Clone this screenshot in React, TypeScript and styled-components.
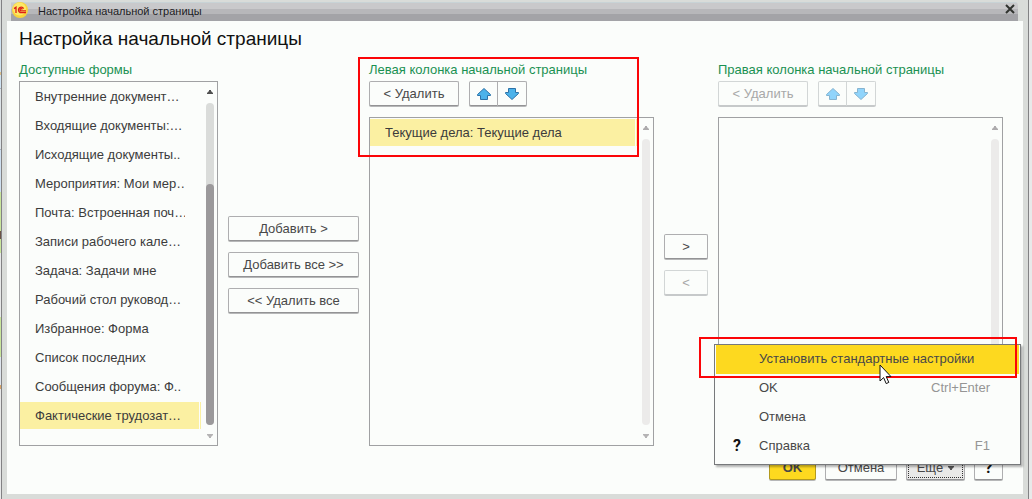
import React from "react";
import styled, { createGlobalStyle, css } from "styled-components";

const GlobalStyle = createGlobalStyle`
  * { box-sizing: border-box; }
  html, body, #root { height: 100%; }
  body {
    margin: 0;
    background: #e6e7e7;
    color: #404040;
    font: 13px/16px "Liberation Sans", Arial, sans-serif;
    overflow: hidden;
  }
  button { font: inherit; }
`;

const Desktop = styled.div`
  height: 100%;
  display: flex;
  padding: 0 3px 0 1px;
  background:
    linear-gradient(
      #d9dcda 0 33px, #cfe3f2 33px 72px, #dcc08c 72px 75px, #cfe3f2 75px 88px, #a9b3bd 88px 89px,
      #dde4e8 89px 149px, #a9b3bd 149px 150px, #cfe0f0 150px 192px, #c9e69c 192px 231px,
      #6b5246 231px 239px, #c9e69c 239px 253px, #e8e9e9 253px 317px, #c9e69c 317px 357px,
      #dfe6ee 357px 385px, #d8a468 385px 389px, #e8e9e9 389px
    ) left / 1px 100% no-repeat,
    #e8e9e9;
`;

const Window = styled.div`
  flex: 1;
  display: flex;
  flex-direction: column;
  border: solid #828284;
  border-width: 0 1px;
  background: #d9dcd9;
  padding: 0 5px 5px;
`;

const TitleBar = styled.header`
  height: 21px;
  flex: none;
  display: flex;
  align-items: center;
  gap: 10px;
  padding: 0 3px 0 1px;
  margin: 0 5px 0 4px;
  border-radius: 0 6px 0 0;
  background: linear-gradient(#d9dcd9 0 2px, #c8d3d6 2px 3px, #c9c9cb 3px 9px, #b7b7ba 9px 14px, #a3a3a7 14px);
  color: #1c1c24;
`;

const WindowTitle = styled.span`
  flex: 1;
  font-size: 11px;
  line-height: 20px;
`;

const Logo = styled.svg`
  flex: none;
  width: 16px;
  height: 18px;
  margin-bottom: 2px;
`;

const CloseButton = styled.button`
  display: flex;
  padding: 0;
  border: 0;
  background: none;
  margin-bottom: 4px;
`;

const Content = styled.main`
  flex: 1;
  display: flex;
  flex-direction: column;
  background: #fbfdfb;
  padding: 6px 20px 13px 12px;
`;

const Heading = styled.h1`
  margin: 0 0 11px;
  font-size: 19px;
  line-height: 24px;
  font-weight: 400;
  color: #111;
`;

const Columns = styled.div`
  flex: 1;
  display: grid;
  grid-template-columns: 199px 131px minmax(0, 1fr) 44px minmax(0, 1fr);
  column-gap: 10px;
`;

const Panel = styled.section`
  position: relative;
  display: flex;
  flex-direction: column;
`;

const PanelTitle = styled.h2`
  margin: 0 0 3px;
  font-size: 13px;
  line-height: 16px;
  font-weight: 400;
  color: #1a9152;
  white-space: nowrap;
`;

const Toolbar = styled.div`
  display: flex;
  gap: 10px;
  margin-bottom: 10px;
`;

const ButtonGroup = styled.div`
  display: flex;
  & > button + button { margin-left: -1px; }
  & > button:first-child { border-radius: 2px 0 0 2px; }
  & > button:last-child { border-radius: 0 2px 2px 0; }
`;

const Button = styled.button<{ $width?: number; $tone?: "primary" | "open" }>`
  display: flex;
  align-items: center;
  justify-content: center;
  gap: 5px;
  flex: none;
  width: ${(p) => (p.$width ? `${p.$width}px` : "auto")};
  height: 25px;
  margin-bottom: 1px;
  padding: 0;
  border: 1px solid #aeaeb0;
  border-bottom-color: #939395;
  border-radius: 2px;
  box-shadow: 0 1px 0 #b6b7b8;
  background: #fbfdfb;
  color: #484848;
  white-space: nowrap;
  &:disabled {
    color: #a8a8a8;
    border-color: #d2d6d6;
    border-bottom-color: #c6c9ca;
    box-shadow: 0 1px 0 #c6c9ca;
  }
  ${(p) =>
    p.$tone === "primary" &&
    css`
      background: #fdd91f;
      border-color: #b39a1d;
      font-weight: 700;
    `}
  ${(p) =>
    p.$tone === "open" &&
    css`
      background: #e9e9e8;
      outline: 1px dotted #333;
      outline-offset: -3px;
    `}
`;

const Transfer = styled.div<{ $top: number }>`
  display: flex;
  flex-direction: column;
  align-items: stretch;
  gap: 10px;
  padding-top: ${(p) => p.$top}px;
`;

const ListBox = styled.div`
  flex: 1;
  display: flex;
  justify-content: space-between;
  border: 1px solid #a0a1a3;
  padding: 1px 3px 0 0;
`;

const Items = styled.ul`
  flex: 1;
  min-width: 0;
  margin: 0;
  padding: 0;
  list-style: none;
  display: flex;
  flex-direction: column;
  gap: 2px;
`;

const Item = styled.li<{ $selected?: boolean }>`
  height: 27px;
  line-height: 27px;
  margin-right: 5px;
  padding: 0 16px 0 15px;
  overflow: clip;
  overflow-clip-margin: content-box;
  white-space: nowrap;
  color: #3c3c3c;
  ${(p) =>
    p.$selected &&
    css`
      background: linear-gradient(
        90deg,
        #fbf0a2 calc(100% - 2px),
        #fbfdfb calc(100% - 2px) calc(100% - 1px),
        #fbf0a2 calc(100% - 1px)
      );
    `}
`;

const ScrollBar = styled.div`
  width: 8px;
  flex: none;
  display: flex;
  flex-direction: column;
  align-items: center;
  padding: 7px 0;
`;

const Track = styled.div<{ $color: string }>`
  flex: 1;
  width: 8px;
  margin: 9px 0;
  border-radius: 4px;
  background: ${(p) => p.$color};
  display: flex;
  align-items: flex-end;
`;

const Thumb = styled.div`
  width: 8px;
  height: 75%;
  border-radius: 4px;
  background: #9b999b;
`;

const Footer = styled.footer`
  position: relative;
  display: flex;
  justify-content: flex-end;
  gap: 9px;
  margin-top: 9px;
`;

const Menu = styled.div`
  position: absolute;
  right: -18px;
  bottom: 16px;
  width: 307px;
  padding: 0 1px 3px;
  border: 1px solid #77797b;
  background: #fbfdfb;
  box-shadow: 2px 2px 2px rgba(0, 0, 0, 0.3);
`;

const MenuItem = styled.button<{ $active?: boolean }>`
  display: grid;
  grid-template-columns: 43px 1fr auto;
  align-items: center;
  width: 100%;
  height: 29px;
  padding: 0 29px 1px 0;
  border: 0;
  text-align: left;
  color: #484848;
  background: ${(p) => (p.$active ? "#fdd91f" : "transparent")};
`;

const HelpMark = styled.span`
  font-family: Roboto, "Liberation Sans", sans-serif;
  font-size: 16px;
  font-weight: 700;
  color: #111;
`;

const MenuMark = styled(HelpMark)`
  padding-left: 17px;
`;

const Shortcut = styled.span`
  color: #959595;
`;

const Callout = styled.div<{ $inset: string; $height: number }>`
  position: absolute;
  inset: ${(p) => p.$inset};
  height: ${(p) => p.$height}px;
  border: 2px solid #fb0508;
  pointer-events: none;
`;

const Cursor = styled.svg`
  position: absolute;
  left: 164px;
  top: 19px;
  width: 13px;
  height: 21px;
  pointer-events: none;
`;

function MoveIcon({ down, muted }: { down?: boolean; muted?: boolean }) {
  return (
    <svg width="16" height="14" viewBox="0 0 16 14">
      <path
        d="M8 1.5 L14.5 7.5 V8.5 H11.5 V12.5 H4.5 V8.5 H1.5 V7.5 Z"
        transform={down ? "rotate(180 8 7)" : undefined}
        fill={muted ? "#90d4fb" : "#4bb2ea"}
        stroke={muted ? "#86b4d0" : "#2c72a8"}
        strokeLinejoin="round"
      />
    </svg>
  );
}

function Arrow({ down, color }: { down?: boolean; color: string }) {
  return (
    <svg width="6" height="4" viewBox="0 0 6 4">
      <path d={down ? "M0 0H6V1L4 3V4H2V3L0 1Z" : "M0 4H6V3L4 1V0H2V1L0 3Z"} fill={color} />
    </svg>
  );
}

function Scroll({ thumb }: { thumb?: boolean }) {
  return (
    <ScrollBar>
      <Arrow color={thumb ? "#505050" : "#adabad"} />
      <Track $color={thumb ? "#dadcda" : "#ecebea"}>{thumb && <Thumb />}</Track>
      <Arrow down color="#b5b4b5" />
    </ScrollBar>
  );
}

function ColumnToolbar({ disabled }: { disabled?: boolean }) {
  return (
    <Toolbar>
      <Button $width={90} disabled={disabled}>&lt; Удалить</Button>
      <ButtonGroup>
        <Button $width={29} disabled={disabled} aria-label="Вверх"><MoveIcon muted={disabled} /></Button>
        <Button $width={30} disabled={disabled} aria-label="Вниз"><MoveIcon down muted={disabled} /></Button>
      </ButtonGroup>
    </Toolbar>
  );
}

const forms = [
  "Внутренние документ…",
  "Входящие документы:…",
  "Исходящие документы..",
  "Мероприятия: Мои мер…",
  "Почта: Встроенная поч…",
  "Записи рабочего кале…",
  "Задача: Задачи мне",
  "Рабочий стол руковод…",
  "Избранное: Форма",
  "Список последних",
  "Сообщения форума: Ф..",
  "Фактические трудозат…",
];

export default function App() {
  return (
    <>
      <GlobalStyle />
      <Desktop>
        <Window>
          <TitleBar>
            <Logo viewBox="0 0 16 18">
              <circle cx="8" cy="9" r="8" fill="#f9d53a" />
              <circle cx="7.5" cy="8" r="6.5" fill="#fde868" />
              <path
                d="M2 7.6 L4 6.2 V12 M11.6 7.6 A2.7 2.7 0 1 0 9.2 11.6 H14 M10.2 8.4 A1.1 1.1 0 1 0 9.2 9.9 H14"
                fill="none"
                stroke="#dd2016"
                strokeWidth="1.3"
              />
            </Logo>
            <WindowTitle>Настройка начальной страницы</WindowTitle>
            <CloseButton aria-label="Закрыть">
              <svg width="10" height="10" viewBox="0 0 10 10">
                <path d="M1 1 L9 9 M9 1 L1 9" stroke="#30332f" strokeWidth="2" />
              </svg>
            </CloseButton>
          </TitleBar>
          <Content>
            <Heading>Настройка начальной страницы</Heading>
            <Columns>
              <Panel>
                <PanelTitle>Доступные формы</PanelTitle>
                <ListBox>
                  <Items>
                    {forms.map((name, i) => (
                      <Item key={name} $selected={i === forms.length - 1}>{name}</Item>
                    ))}
                  </Items>
                  <Scroll thumb />
                </ListBox>
              </Panel>
              <Transfer $top={154}>
                <Button>Добавить &gt;</Button>
                <Button>Добавить все &gt;&gt;</Button>
                <Button>&lt;&lt; Удалить все</Button>
              </Transfer>
              <Panel>
                <PanelTitle>Левая колонка начальной страницы</PanelTitle>
                <ColumnToolbar />
                <ListBox>
                  <Items>
                    <Item $selected>Текущие дела: Текущие дела</Item>
                  </Items>
                  <Scroll />
                </ListBox>
                <Callout $inset="-5px 15px auto -11px" $height={100} />
              </Panel>
              <Transfer $top={172}>
                <Button>&gt;</Button>
                <Button disabled>&lt;</Button>
              </Transfer>
              <Panel>
                <PanelTitle>Правая колонка начальной страницы</PanelTitle>
                <ColumnToolbar disabled />
                <ListBox>
                  <Items />
                  <Scroll />
                </ListBox>
              </Panel>
            </Columns>
            <Footer>
              <Button $width={47} $tone="primary">OK</Button>
              <Button $width={72}>Отмена</Button>
              <Button $width={59} $tone="open">
                Ещё <Arrow down color="#555" />
              </Button>
              <Button $width={29} aria-label="Справка"><HelpMark>?</HelpMark></Button>
              <Menu>
                <MenuItem $active><span /><span>Установить стандартные настройки</span></MenuItem>
                <MenuItem><span /><span>OK</span><Shortcut>Ctrl+Enter</Shortcut></MenuItem>
                <MenuItem><span /><span>Отмена</span></MenuItem>
                <MenuItem><MenuMark>?</MenuMark><span>Справка</span><Shortcut>F1</Shortcut></MenuItem>
                <Callout $inset="-8px 3px auto -16px" $height={41} />
                <Cursor viewBox="0 0 13 21">
                  <path d="M1 1 V17 L4.6 13.6 L7.2 19.6 L9.8 18.4 L7.2 12.6 H12 Z" fill="#fff" stroke="#111" />
                </Cursor>
              </Menu>
            </Footer>
          </Content>
        </Window>
      </Desktop>
    </>
  );
}
